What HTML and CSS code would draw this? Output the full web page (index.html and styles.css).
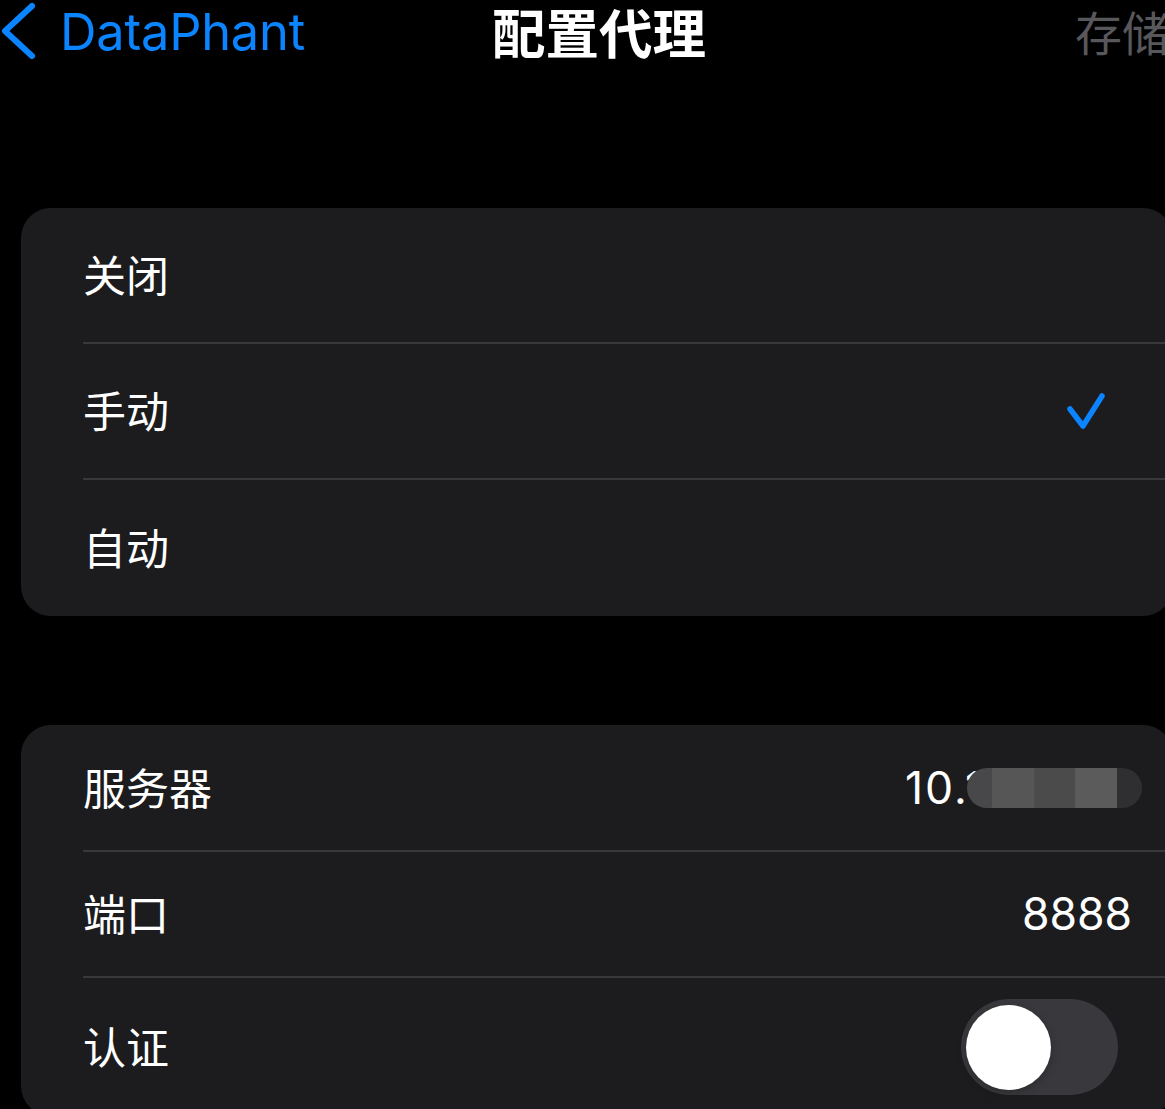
FILE: index.html
```html
<!DOCTYPE html>
<html lang="zh">
<head>
<meta charset="utf-8">
<title>配置代理</title>
<link rel="stylesheet" href="styles.css">
</head>
<body>
<div class="screen">
  <header class="nav">
    <a class="back">
      <svg class="chev" width="40" height="62" viewBox="0 0 40 62"><path d="M33 6 L6 31 L33 56" fill="none" stroke="#0a84ff" stroke-width="6" stroke-linecap="round" stroke-linejoin="round"/></svg>
      <span class="back-text">DataPhant</span>
    </a>
    <h1 class="title">配置代理</h1>
    <span class="save">存储</span>
  </header>

  <section class="card first">
    <div class="row"><span class="label">关闭</span></div>
    <div class="row"><span class="label">手动</span>
      <svg class="check" width="42" height="40" viewBox="0 0 42 40"><path d="M5 18 L18 35 L37 5" fill="none" stroke="#0a84ff" stroke-width="5.5" stroke-linecap="round" stroke-linejoin="round"/></svg>
    </div>
    <div class="row"><span class="label">自动</span></div>
  </section>

  <section class="card second">
    <div class="row r1"><span class="label">服务器</span>
      <span class="value server"><span class="ip">10.1</span><span class="blur"><i class="b1"></i><i class="b2"></i><i class="b3"></i><i class="b4"></i><i class="b5"></i></span></span>
    </div>
    <div class="row r2"><span class="label">端口</span><span class="value port">8888</span></div>
    <div class="row r3"><span class="label">认证</span>
      <span class="toggle"><span class="knob"></span></span>
    </div>
  </section>
</div>
</body>
</html>
```

FILE: styles.css
```css
html, body {
  margin: 0;
  padding: 0;
  background: #000;
}
body {
  width: 1165px;
  height: 1109px;
  overflow: hidden;
  font-family: "Noto Sans CJK SC", "Noto Sans", sans-serif;
  color: #fff;
}
.screen {
  display: flex;
  flex-direction: column;
}
.nav {
  height: 62px;
  display: flex;
  align-items: center;
}
.back {
  display: flex;
  align-items: center;
  margin-left: -1px;
}
.chev { display: block; }
.back-text {
  font-family: "Inter", "Liberation Sans", sans-serif;
  font-size: 50.5px;
  color: #0a84ff;
  margin-left: 21px;
  letter-spacing: -0.2px;
}
.title {
  margin: 0 0 0 187px;
  font-size: 53.5px;
  font-weight: 700;
  color: #fff;
  line-height: 60px;
  white-space: nowrap;
}
.save {
  margin-left: auto;
  margin-right: -4px;
  font-size: 47px;
  line-height: 60px;
  color: #58585c;
  white-space: nowrap;
}
.card {
  background: #1c1c1e;
  margin-left: 21px;
  margin-right: -8px;
  border-radius: 30px;
  display: flex;
  flex-direction: column;
}
.card.first { margin-top: 146px; }
.card.second { margin-top: 109px; }
.row {
  height: 136px;
  box-sizing: border-box;
  margin-left: 62px;
  display: flex;
  align-items: center;
  border-bottom: 2px solid #38383a;
}
.row:last-child { border-bottom: none; }
.second .r1 { height: 127px; }
.second .r2 { height: 126px; }
.second .r3 { height: 138px; }
.label {
  font-size: 43px;
  color: #fff;
  position: relative;
  top: -2px;
}
.check {
  margin-left: auto;
  margin-right: 66px;
  display: block;
}
.value {
  margin-left: auto;
  font-family: "Inter", "Liberation Sans", sans-serif;
  font-size: 44.5px;
  color: #fff;
}
.port { margin-right: 41px; }
.server {
  display: flex;
  align-items: center;
  margin-right: 31px;
}
.ip { letter-spacing: 2px; }
.blur {
  display: flex;
  height: 40px;
  margin-left: -18px;
  border-radius: 20px / 20px;
  overflow: hidden;
}
.blur i { display: block; height: 40px; }
.b1 { width: 25px; background: #48484a; }
.b2 { width: 42px; background: #565657; }
.b3 { width: 41px; background: #4b4b4c; }
.b4 { width: 42px; background: #5b5b5c; }
.b5 { width: 25px; background: #2f2f31; }
.toggle {
  margin-left: auto;
  margin-right: 55px;
  width: 157px;
  height: 96px;
  border-radius: 48px;
  background: #39393d;
  box-sizing: border-box;
  padding: 5px;
  display: flex;
  align-items: center;
}
.knob {
  width: 85px;
  height: 85px;
  border-radius: 50%;
  background: #fff;
  box-shadow: 0 3px 8px rgba(0,0,0,0.25);
}
```
